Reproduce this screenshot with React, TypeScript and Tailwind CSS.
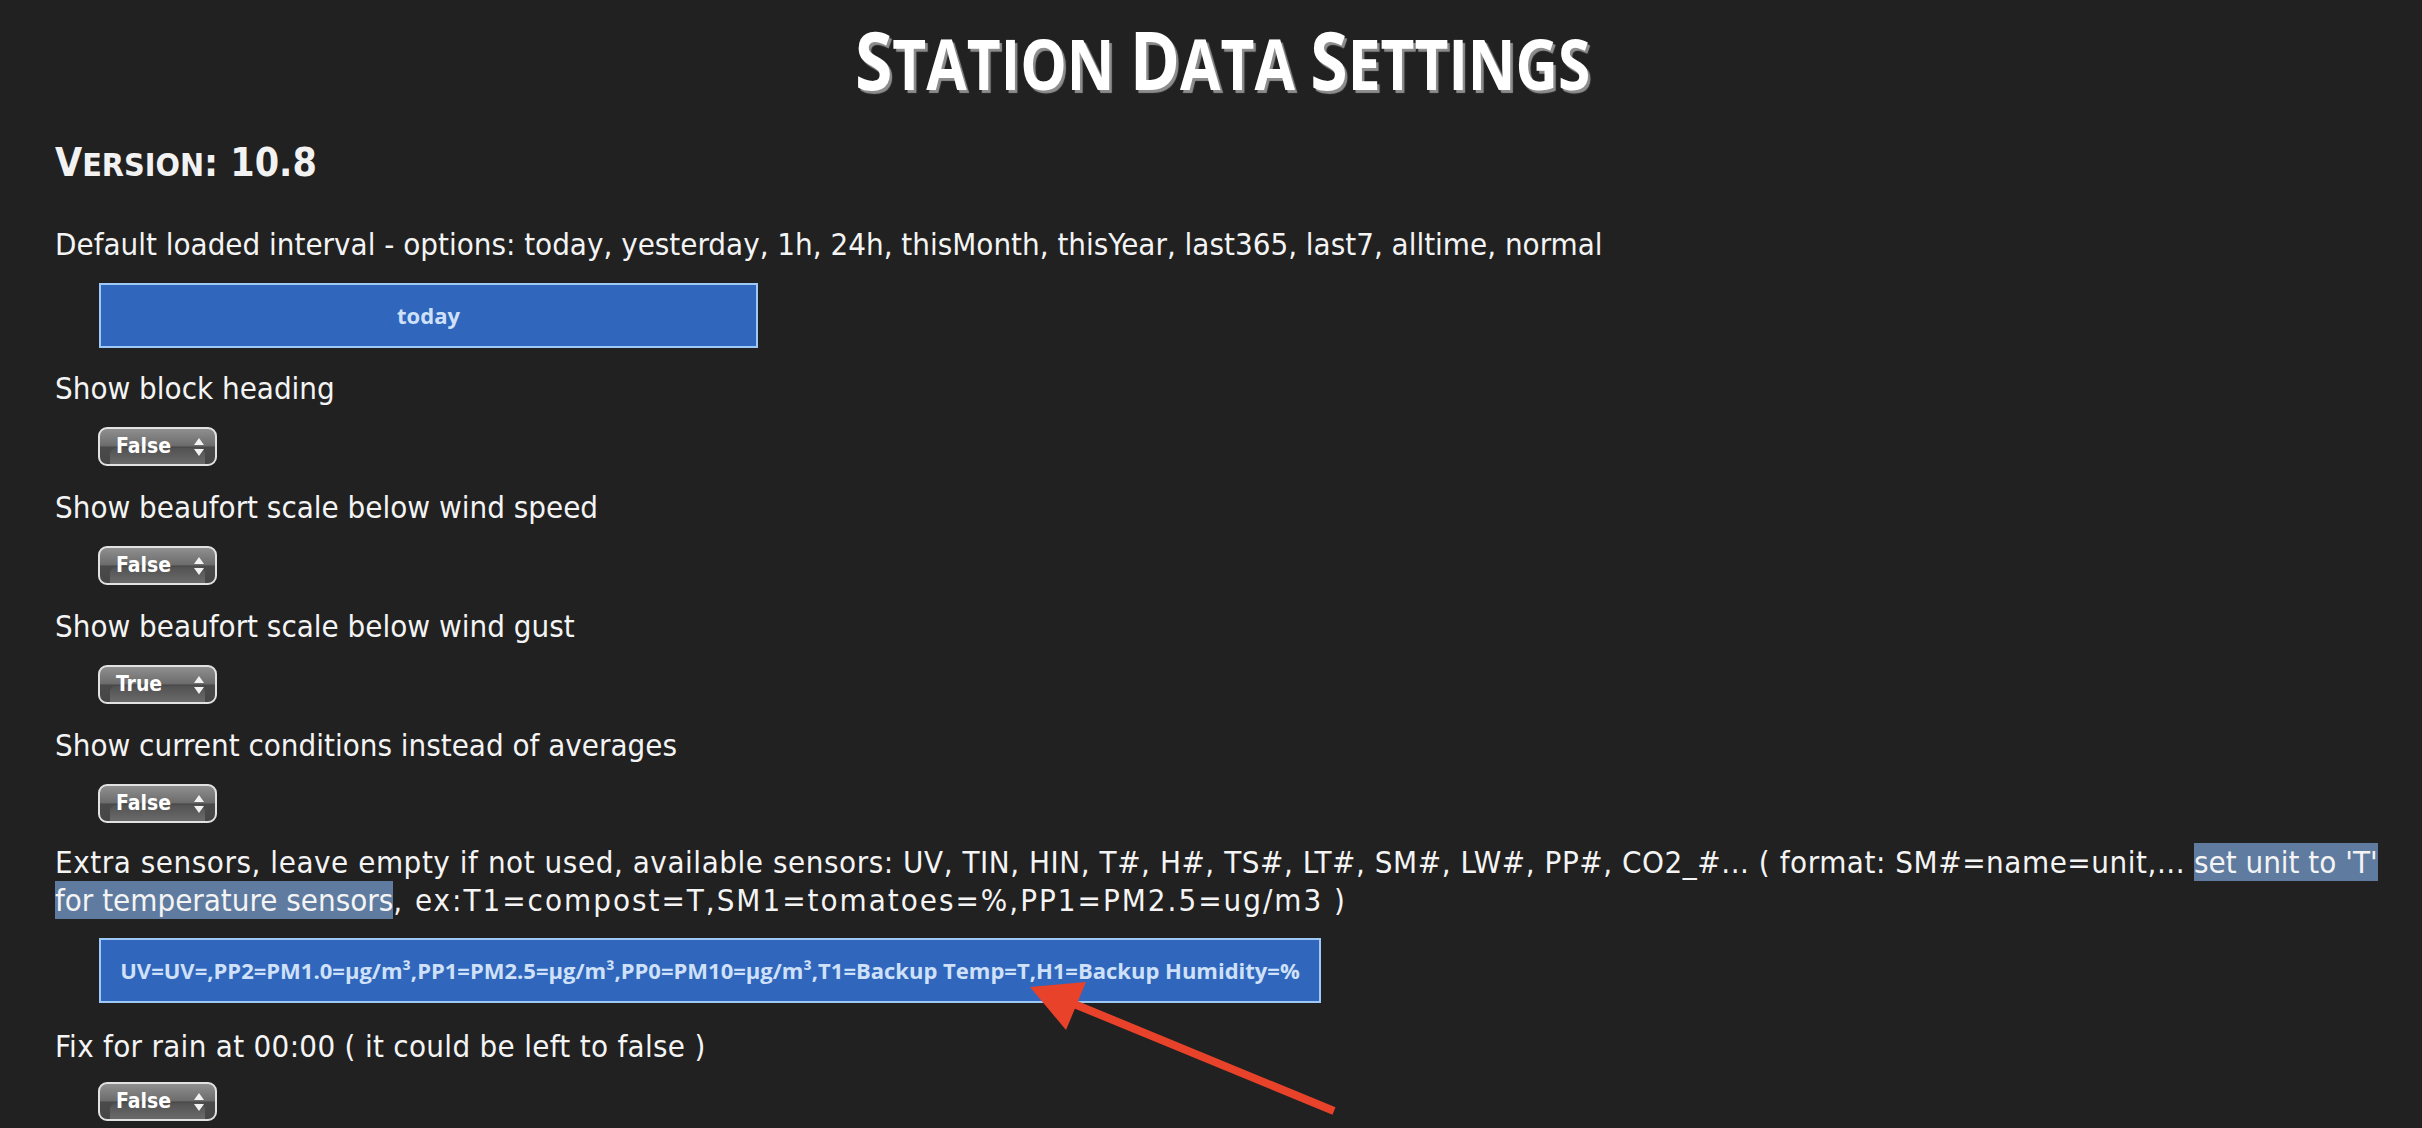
import React from "react";

function Sel({ v }: { v: string }) {
  return (
    <div className="relative ml-[43px] h-[39px] w-[119px] overflow-hidden rounded-[9px] border-2 border-[#e2e2e2] bg-[linear-gradient(to_bottom,#8f8f8f_0%,#6d6d6d_47%,#4a4a4a_52%,#464646_100%)]">
      <div className="absolute bottom-0 left-[10px] right-[10px] h-[16px] rounded-t-[6px] bg-[linear-gradient(to_bottom,#525252,#6a6a6a)]" />
      <span className="absolute left-[16px] top-0 font-['DejaVu_Sans',sans-serif] text-[21px] font-bold leading-[35px] text-white [font-stretch:condensed]">
        {v}
      </span>
      <svg className="absolute left-[94px] top-[9px]" width="10" height="18" viewBox="0 0 10 18">
        <path d="M5 0 L10 7 L0 7 Z M0 11 L10 11 L5 18 Z" fill="#f2f2f2" />
      </svg>
    </div>
  );
}

function Inp({ v, w }: { v: string; w: string }) {
  return (
    <div
      className={`ml-[44px] flex h-[65px] items-center justify-center whitespace-nowrap border-2 border-[#9ec9f6] bg-[#3066bb] font-['Open_Sans',sans-serif] text-[22px] font-bold text-[#cfe1f8] [font-stretch:100%] ${w}`}
    >
      {v}
    </div>
  );
}

function Label({ children }: { children: React.ReactNode }) {
  return <div className="mb-[20px] whitespace-nowrap leading-[38px]">{children}</div>;
}

export default function App() {
  return (
    <div className="relative min-h-screen w-full overflow-hidden bg-[#212121] text-[#f4f4f4]">
      <h1 className="pl-[23px] pt-[18px] text-center font-['Open_Sans',sans-serif] font-bold leading-[81px] text-white [text-shadow:3px_3px_1px_#8d8d8d]">
        <span className="inline-block scale-x-[0.85] whitespace-nowrap">
          <span className="text-[80px]">S</span>
          <span className="text-[69px]">TATION </span>
          <span className="text-[80px]">D</span>
          <span className="text-[69px]">ATA </span>
          <span className="text-[80px]">S</span>
          <span className="text-[69px]">ETTINGS</span>
        </span>
      </h1>

      <div className="pl-[55px] font-['DejaVu_Sans',sans-serif] text-[31px] [font-stretch:condensed]">
        <div className="mt-[18px] font-bold leading-[40px] text-[#f2f2f2]">
          <span className="text-[39px]">V</span>
          <span className="text-[32px]">ERSION</span>
          <span className="text-[39px]">: 10.8</span>
        </div>

        <div className="mt-[40px]">
          <Label>
            Default loaded interval - options: today, yesterday, 1h, 24h, thisMonth, thisYear, last365, last7,
            alltime, normal
          </Label>
          <div className="mb-[21px]">
            <Inp v="today" w="w-[659px]" />
          </div>

          <Label>Show block heading</Label>
          <div className="mb-[22px]">
            <Sel v="False" />
          </div>

          <Label>Show beaufort scale below wind speed</Label>
          <div className="mb-[22px]">
            <Sel v="False" />
          </div>

          <Label>Show beaufort scale below wind gust</Label>
          <div className="mb-[22px]">
            <Sel v="True" />
          </div>

          <Label>Show current conditions instead of averages</Label>
          <div className="mb-[20px]">
            <Sel v="False" />
          </div>

          <div className="mb-[19px] leading-[38px]">
            <div className="whitespace-nowrap">
              <span className="tracking-[0.55px]">
                Extra sensors, leave empty if not used, available sensors: UV, TIN, HIN, T#, H#, TS#, LT#, SM#, LW#,
                PP#, CO2_#... ( format: SM#=name=unit,...
              </span>{" "}
              <span className="inline-block bg-[#5f7ba0] leading-[38px]">set unit to 'T'</span>
            </div>
            <div className="whitespace-nowrap">
              <span className="inline-block bg-[#5f7ba0] leading-[38px]">for temperature sensors</span>
              <span className="tracking-[2px]">, ex:T1=compost=T,SM1=tomatoes=%,PP1=PM2.5=ug/m3 )</span>
            </div>
          </div>
          <div className="mb-[24px]">
            <Inp
              v="UV=UV=,PP2=PM1.0=µg/m³,PP1=PM2.5=µg/m³,PP0=PM10=µg/m³,T1=Backup Temp=T,H1=Backup Humidity=%"
              w="w-[1222px]"
            />
          </div>

          <div className="mb-[17px] whitespace-nowrap leading-[38px] tracking-[0.3px]">
            Fix for rain at 00:00 ( it could be left to false )
          </div>
          <Sel v="False" />
        </div>
      </div>

      <svg
        className="pointer-events-none absolute left-0 top-0"
        width="2422"
        height="1128"
        viewBox="0 0 2422 1128"
      >
        <polygon points="1030,987 1086,982 1066,1030" fill="#e9422a" />
        <line x1="1062" y1="999" x2="1334" y2="1111" stroke="#e9422a" strokeWidth="8" />
      </svg>
    </div>
  );
}
